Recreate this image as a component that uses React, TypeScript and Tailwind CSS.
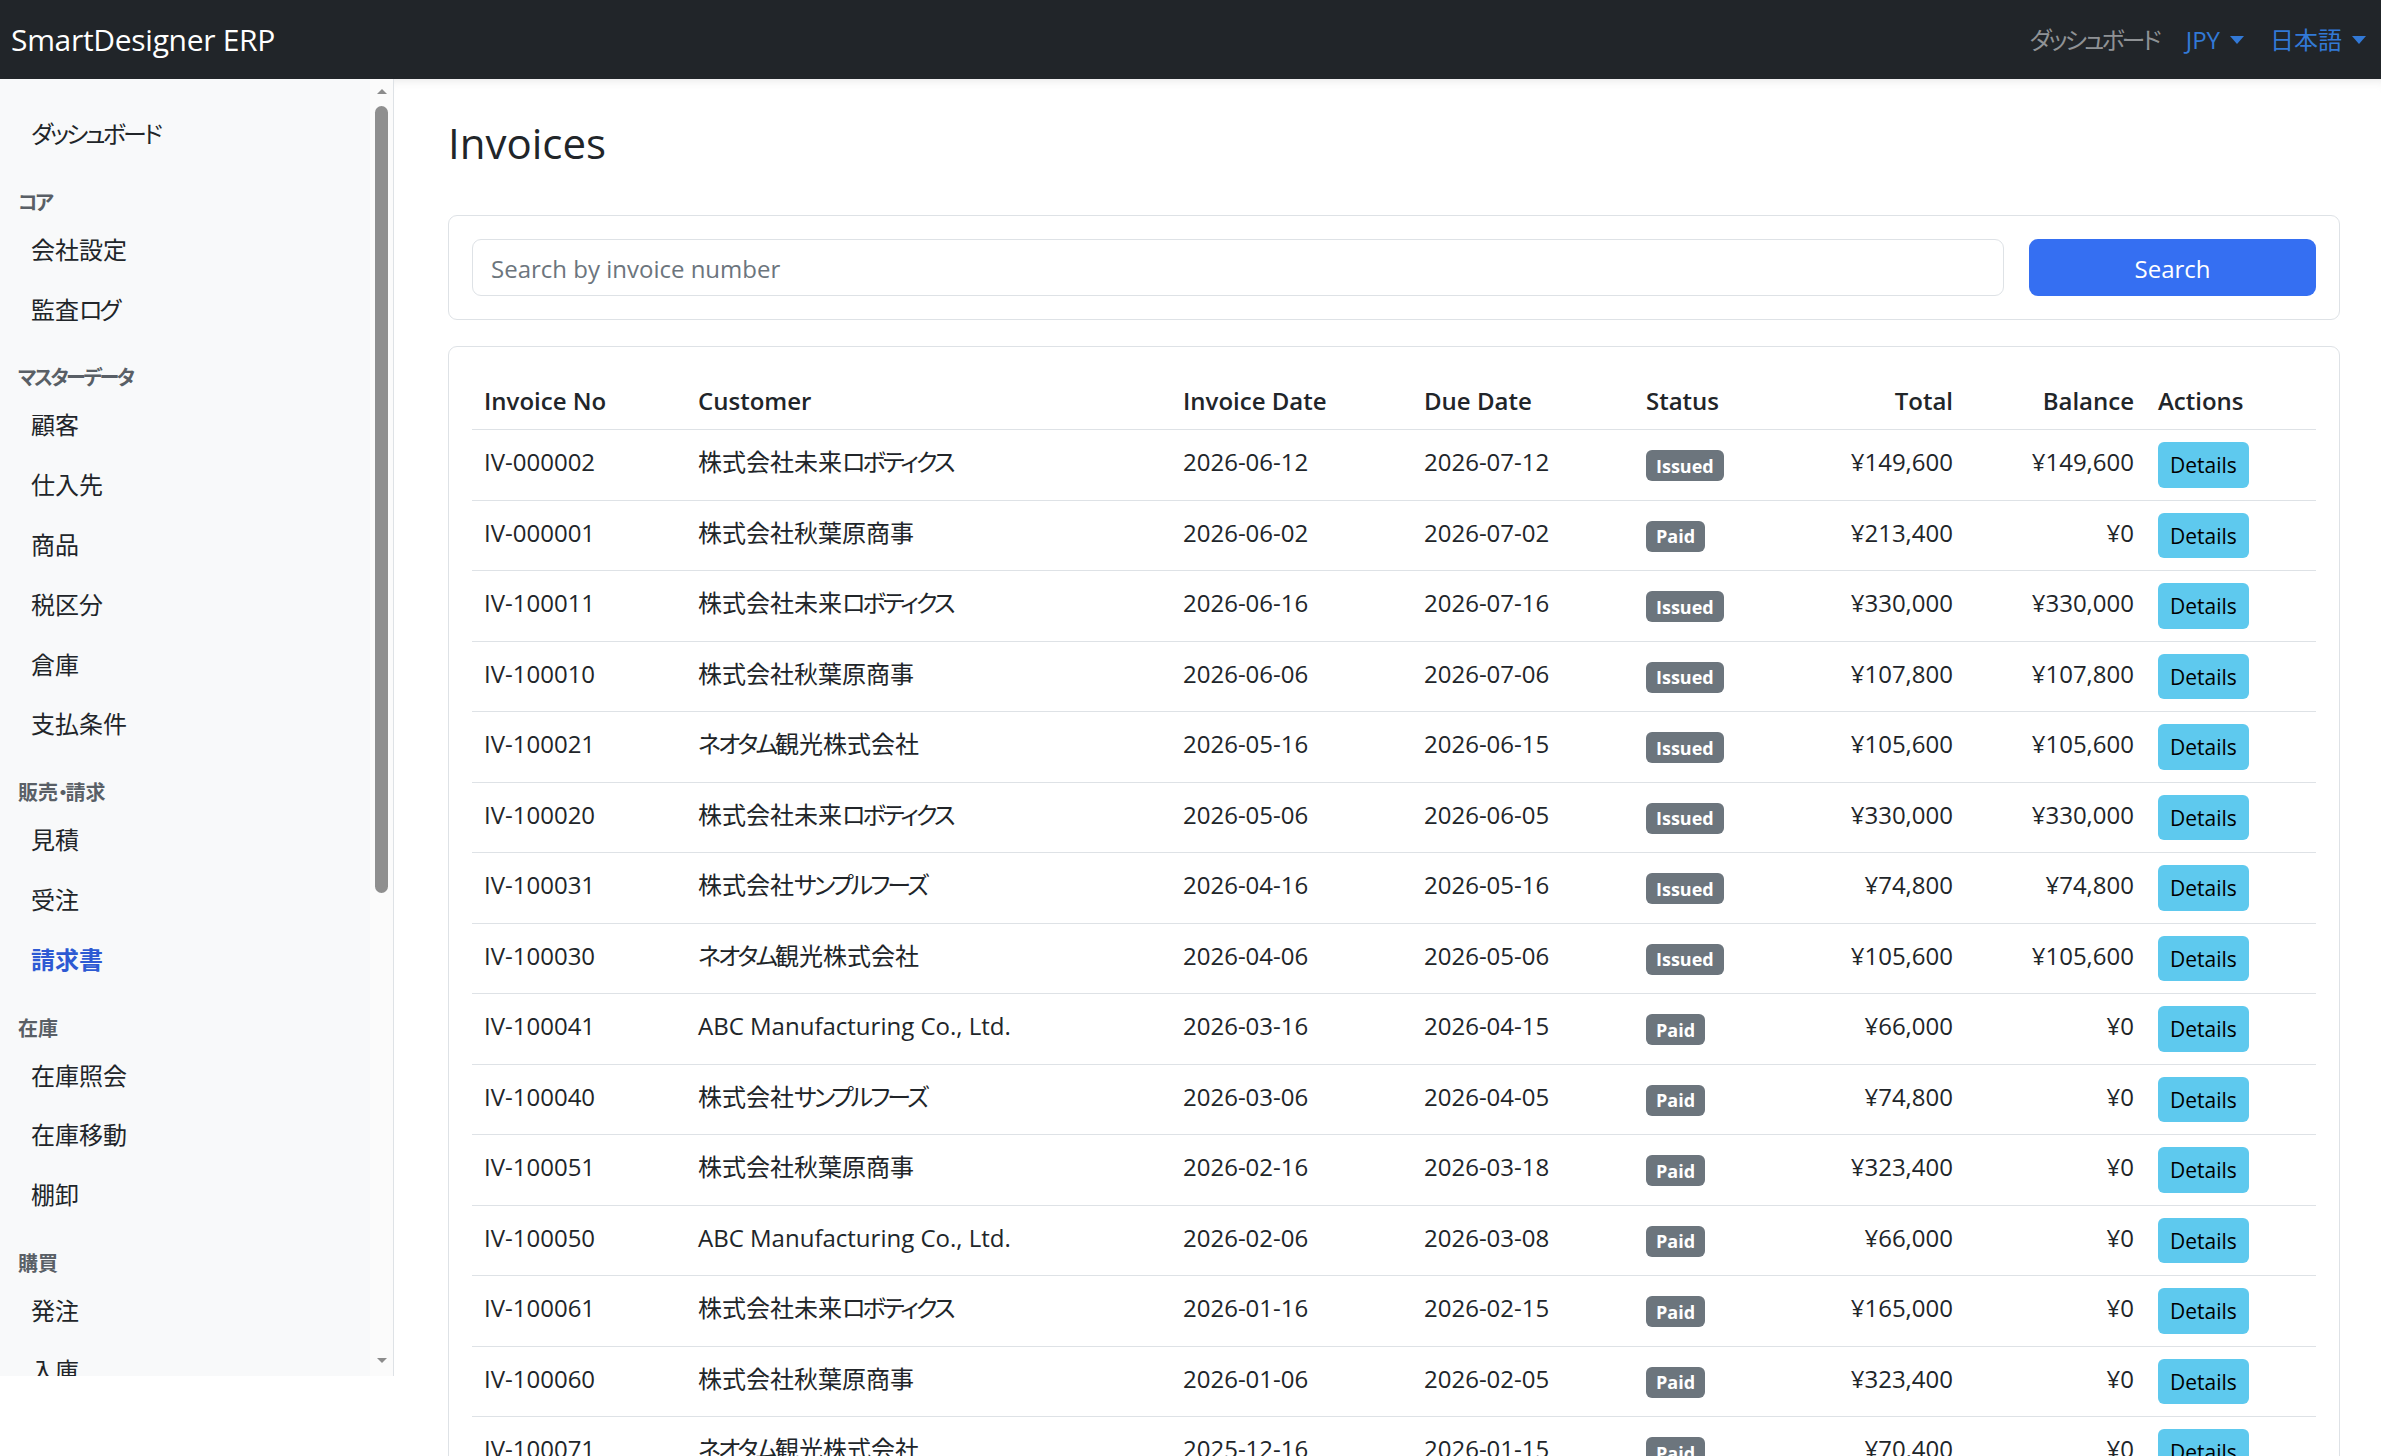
import React from "react";

type Status = "Issued" | "Paid";

interface InvoiceRow {
  no: string;
  customer: string;
  date: string;
  due: string;
  status: Status;
  total: string;
  balance: string;
}

const invoices: InvoiceRow[] = [
  { no: "IV-000002", customer: "株式会社未来ロボティクス", date: "2026-06-12", due: "2026-07-12", status: "Issued", total: "¥149,600", balance: "¥149,600" },
  { no: "IV-000001", customer: "株式会社秋葉原商事", date: "2026-06-02", due: "2026-07-02", status: "Paid", total: "¥213,400", balance: "¥0" },
  { no: "IV-100011", customer: "株式会社未来ロボティクス", date: "2026-06-16", due: "2026-07-16", status: "Issued", total: "¥330,000", balance: "¥330,000" },
  { no: "IV-100010", customer: "株式会社秋葉原商事", date: "2026-06-06", due: "2026-07-06", status: "Issued", total: "¥107,800", balance: "¥107,800" },
  { no: "IV-100021", customer: "ネオタム観光株式会社", date: "2026-05-16", due: "2026-06-15", status: "Issued", total: "¥105,600", balance: "¥105,600" },
  { no: "IV-100020", customer: "株式会社未来ロボティクス", date: "2026-05-06", due: "2026-06-05", status: "Issued", total: "¥330,000", balance: "¥330,000" },
  { no: "IV-100031", customer: "株式会社サンプルフーズ", date: "2026-04-16", due: "2026-05-16", status: "Issued", total: "¥74,800", balance: "¥74,800" },
  { no: "IV-100030", customer: "ネオタム観光株式会社", date: "2026-04-06", due: "2026-05-06", status: "Issued", total: "¥105,600", balance: "¥105,600" },
  { no: "IV-100041", customer: "ABC Manufacturing Co., Ltd.", date: "2026-03-16", due: "2026-04-15", status: "Paid", total: "¥66,000", balance: "¥0" },
  { no: "IV-100040", customer: "株式会社サンプルフーズ", date: "2026-03-06", due: "2026-04-05", status: "Paid", total: "¥74,800", balance: "¥0" },
  { no: "IV-100051", customer: "株式会社秋葉原商事", date: "2026-02-16", due: "2026-03-18", status: "Paid", total: "¥323,400", balance: "¥0" },
  { no: "IV-100050", customer: "ABC Manufacturing Co., Ltd.", date: "2026-02-06", due: "2026-03-08", status: "Paid", total: "¥66,000", balance: "¥0" },
  { no: "IV-100061", customer: "株式会社未来ロボティクス", date: "2026-01-16", due: "2026-02-15", status: "Paid", total: "¥165,000", balance: "¥0" },
  { no: "IV-100060", customer: "株式会社秋葉原商事", date: "2026-01-06", due: "2026-02-05", status: "Paid", total: "¥323,400", balance: "¥0" },
  { no: "IV-100071", customer: "ネオタム観光株式会社", date: "2025-12-16", due: "2026-01-15", status: "Paid", total: "¥70,400", balance: "¥0" },
  { no: "IV-100070", customer: "株式会社サンプルフーズ", date: "2025-12-06", due: "2026-01-05", status: "Paid", total: "¥74,800", balance: "¥0" },
];

type NavEntry = { kind: "item" | "header"; label: string; active?: boolean };

const sidebar: NavEntry[] = [
  { kind: "item", label: "ダッシュボード" },
  { kind: "header", label: "コア" },
  { kind: "item", label: "会社設定" },
  { kind: "item", label: "監査ログ" },
  { kind: "header", label: "マスターデータ" },
  { kind: "item", label: "顧客" },
  { kind: "item", label: "仕入先" },
  { kind: "item", label: "商品" },
  { kind: "item", label: "税区分" },
  { kind: "item", label: "倉庫" },
  { kind: "item", label: "支払条件" },
  { kind: "header", label: "販売・請求" },
  { kind: "item", label: "見積" },
  { kind: "item", label: "受注" },
  { kind: "item", label: "請求書", active: true },
  { kind: "header", label: "在庫" },
  { kind: "item", label: "在庫照会" },
  { kind: "item", label: "在庫移動" },
  { kind: "item", label: "棚卸" },
  { kind: "header", label: "購買" },
  { kind: "item", label: "発注" },
  { kind: "item", label: "入庫" },
];

// katakana in the original font is narrower than in Noto CJK, so tighten those runs
const Jp = ({ text }: { text: string }) => {
  const parts = text.split(/([\u30A0-\u30FF]+)/);
  return (
    <>
      {parts.map((p, i) =>
        /^[\u30A0-\u30FF]+$/.test(p) ? (
          <span key={i} className="tracking-[-0.12em]">
            {p}
          </span>
        ) : (
          <React.Fragment key={i}>{p}</React.Fragment>
        )
      )}
    </>
  );
};

const Caret = () => (
  <span className="inline-block ml-[10px] align-middle border-t-[8px] border-x-[7.5px] border-x-transparent border-t-current" />
);

const Navbar = () => (
  <header className="h-[79px] shrink-0 bg-[#212529] flex items-center justify-between pl-[11px] pr-[15px]">
    <span className="text-white text-[30px] font-medium tracking-[-0.3px]">SmartDesigner ERP</span>
    <nav className="flex items-center text-[24px]">
      <span className="pl-[12px] pr-[27px] text-[#8f9295]">
        <Jp text="ダッシュボード" />
      </span>
      <span className="pr-[26px] text-[#3279d6] flex items-center">
        JPY
        <Caret />
      </span>
      <span className="text-[#3279d6] flex items-center">
        日本語
        <Caret />
      </span>
    </nav>
  </header>
);

const Sidebar = () => (
  <aside className="w-[394px] h-[1297px] shrink-0 bg-[#f8f9fa] border-r border-[#dee2e6] flex overflow-hidden">
    <ul className="flex-1 pt-[25px] pl-[18px]">
      {sidebar.map((entry) =>
        entry.kind === "header" ? (
          <li key={entry.label} className="pt-[25px] pb-[3px] leading-[28px] text-[20px] font-semibold text-[#595f66]">
            <Jp text={entry.label} />
          </li>
        ) : (
          <li
            key={entry.label}
            className={
              entry.active
                ? "pl-[13px] py-[12px] leading-[35.8px] text-[24px] font-bold text-[#2d5ad3]"
                : "pl-[13px] py-[12px] leading-[35.8px] text-[24px] text-[#212529]"
            }
          >
            <Jp text={entry.label} />
          </li>
        )
      )}
    </ul>
    {/* fake scrollbar */}
    <div className="w-[23px] shrink-0 bg-[#fbfbfb] flex flex-col items-center">
      <span className="mt-[10px] border-b-[5px] border-x-[5px] border-x-transparent border-b-[#8c8c8c]" />
      <span className="mt-[12px] w-[13px] h-[787px] rounded-full bg-[#8f8f8f]" />
      <span className="mt-auto mb-[13px] border-t-[5px] border-x-[5px] border-x-transparent border-t-[#8c8c8c]" />
    </div>
  </aside>
);

const StatusBadge = ({ status }: { status: Status }) => (
  <span className="mt-[6px] block w-fit rounded-[6px] bg-[#6c757d] text-white text-[18px] font-bold leading-none px-[10px] py-[6.5px]">
    {status}
  </span>
);

const cell = "px-[12px] pt-[14px] pb-[10px] leading-[36px]";
const head = "px-[12px] pt-[13px] pb-[11px] leading-[35px] font-semibold";

export default function App() {
  return (
    <div className="h-screen overflow-hidden flex flex-col bg-white text-[#212529] font-['Open_Sans','Noto_Sans_CJK_JP',sans-serif] [font-feature-settings:'palt']">
      <Navbar />
      <div className="flex flex-1 min-h-0">
        <Sidebar />
        <main className="flex-1 min-w-0 pl-[54px] pr-[41px] pt-[39px] shadow-[inset_0_10px_12px_-10px_rgba(0,0,0,0.12)]">
          <h1 className="text-[42px] font-medium leading-[50px] text-[#212529] mb-[47px]">Invoices</h1>

          <div className="border border-[#dee2e6] rounded-[9px] p-[23px] flex gap-[25px]">
            <input
              type="text"
              placeholder="Search by invoice number"
              className="flex-1 h-[57px] border border-[#dee2e6] rounded-[9px] px-[18px] pt-[2px] text-[24px] placeholder:text-[#6c757d] outline-none"
            />
            <button className="w-[287px] h-[57px] pt-[2px] rounded-[9px] bg-[#356ff2] text-white text-[24px]">Search</button>
          </div>

          <div className="mt-[26px] border border-[#dee2e6] rounded-[9px] p-[23px]">
            <table className="w-full table-fixed border-collapse text-[24px]">
              <colgroup>
                <col className="w-[214px]" />
                <col className="w-[485px]" />
                <col className="w-[241px]" />
                <col className="w-[222px]" />
                <col className="w-[160px]" />
                <col className="w-[171px]" />
                <col className="w-[181px]" />
                <col className="w-[170px]" />
              </colgroup>
              <thead>
                <tr className="border-b border-[#dee2e6]">
                  <th className={`${head} text-left`}>Invoice No</th>
                  <th className={`${head} text-left`}>Customer</th>
                  <th className={`${head} text-left`}>Invoice Date</th>
                  <th className={`${head} text-left`}>Due Date</th>
                  <th className={`${head} text-left`}>Status</th>
                  <th className={`${head} text-right`}>Total</th>
                  <th className={`${head} text-right`}>Balance</th>
                  <th className={`${head} text-left`}>Actions</th>
                </tr>
              </thead>
              <tbody>
                {invoices.map((row) => (
                  <tr key={row.no} className="border-b border-[#dee2e6] align-top">
                    <td className={cell}>{row.no}</td>
                    <td className={`${cell} whitespace-nowrap`}>
                      <Jp text={row.customer} />
                    </td>
                    <td className={cell}>{row.date}</td>
                    <td className={cell}>{row.due}</td>
                    <td className={cell}>
                      <StatusBadge status={row.status} />
                    </td>
                    <td className={`${cell} text-right`}>{row.total}</td>
                    <td className={`${cell} text-right`}>{row.balance}</td>
                    <td className="px-[12px] py-[12px]">
                      <button className="h-[45.5px] px-[12px] pt-[2px] rounded-[6px] bg-[#5ec9ee] text-[#000] text-[21px] leading-none">
                        Details
                      </button>
                    </td>
                  </tr>
                ))}
              </tbody>
            </table>
          </div>
        </main>
      </div>
    </div>
  );
}
